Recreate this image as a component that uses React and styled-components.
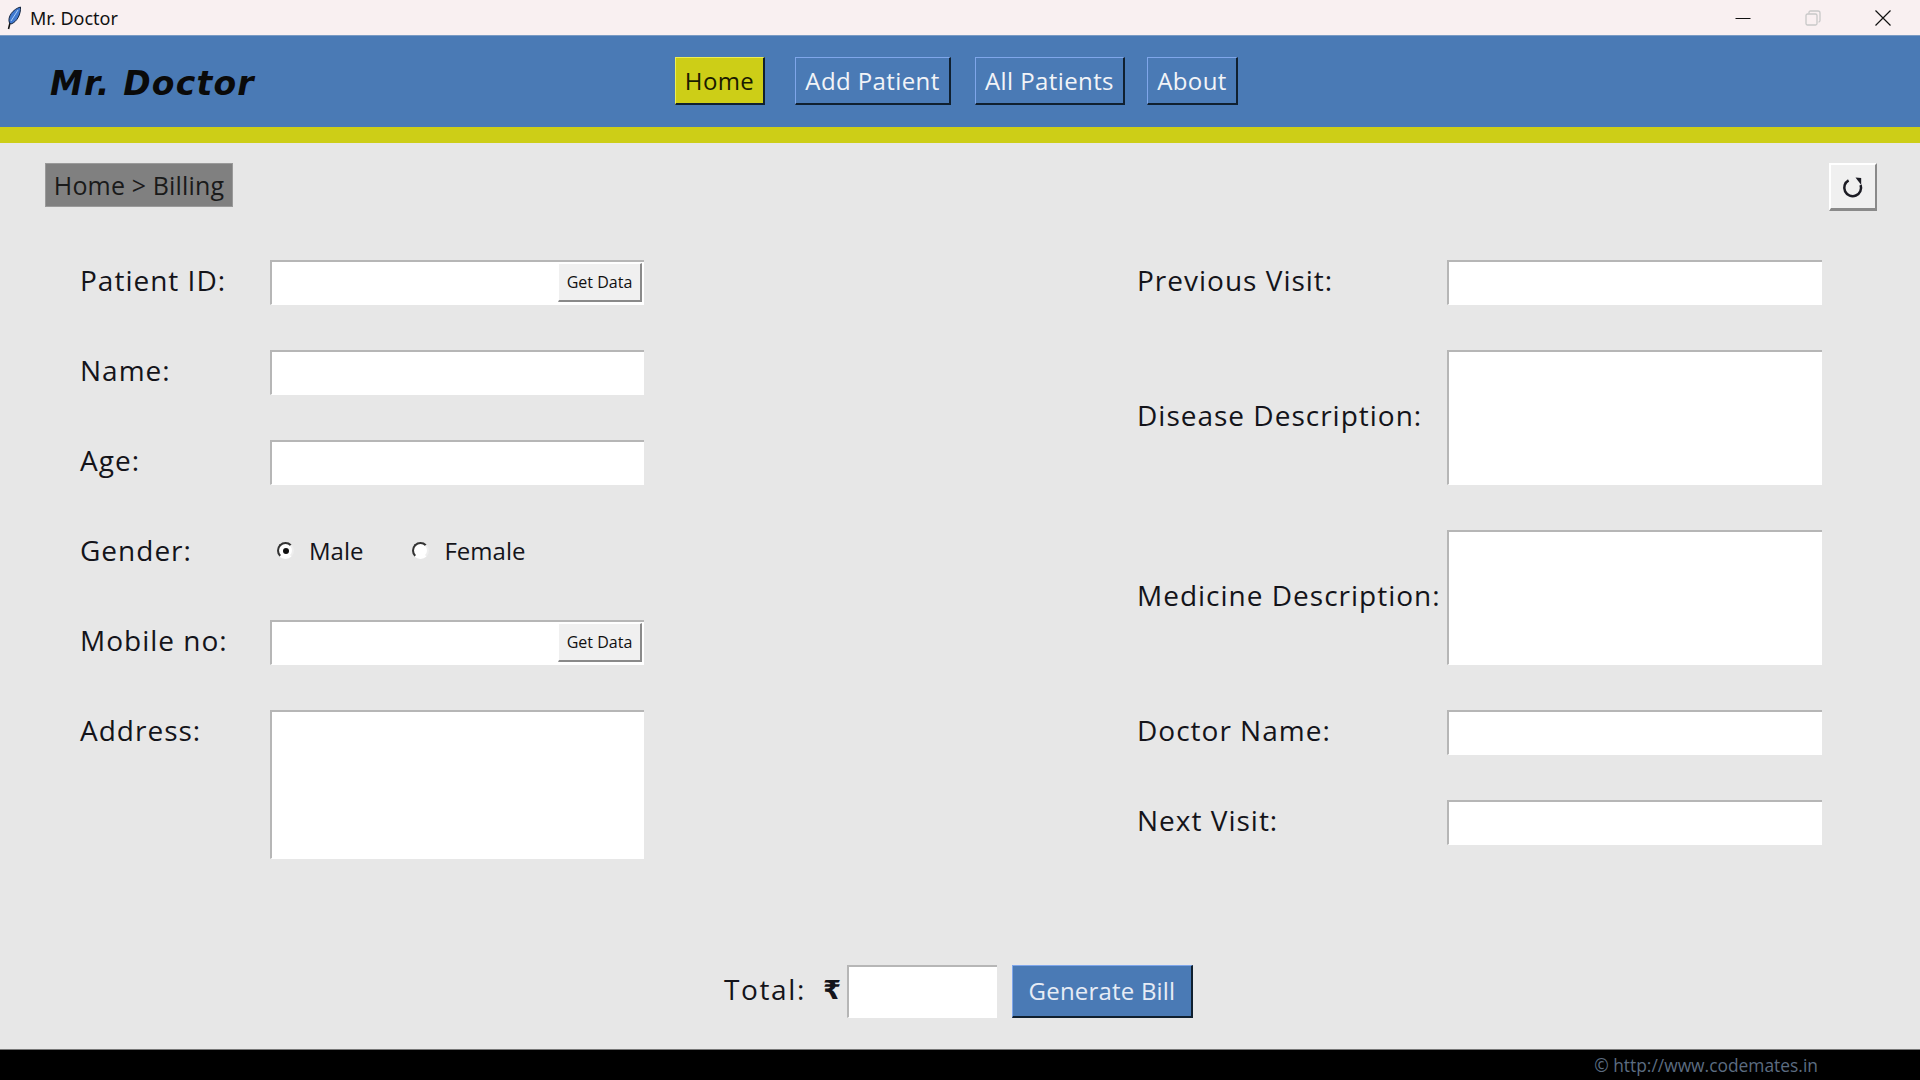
import React from 'react';
import styled, { createGlobalStyle } from 'styled-components';

const GlobalStyle = createGlobalStyle`
  html, body {
    margin: 0;
    padding: 0;
    height: 100%;
    overflow: hidden;
  }
  * {
    box-sizing: border-box;
  }
`;

const Page = styled.div`
  display: flex;
  flex-direction: column;
  width: 1920px;
  height: 1080px;
  background: #e7e7e7;
  font-family: "Open Sans", "DejaVu Sans", sans-serif;
  color: #14141a;
`;

const TitleBar = styled.div`
  display: flex;
  align-items: center;
  height: 35px;
  padding-left: 6px;
  background: #f9f0f1;
  font-family: "Noto Sans", sans-serif;
  font-size: 18px;
  color: #111;
`;

const TitleText = styled.span`
  margin-left: 8px;
`;

const WindowButtons = styled.div`
  display: flex;
  align-items: center;
  margin-left: auto;
  padding-right: 2px;
`;

const WindowButton = styled.div`
  display: flex;
  align-items: center;
  justify-content: center;
  width: 70px;
  height: 35px;
`;

const Header = styled.header`
  display: flex;
  align-items: flex-start;
  height: 92px;
  background: #4a7ab5;
  border-top: 1px solid #7a9bc4;
`;

const Logo = styled.div`
  width: 675px;
  padding: 28px 0 0 50px;
  font-family: "DejaVu Sans", sans-serif;
  font-style: italic;
  font-weight: 700;
  font-size: 33px;
  letter-spacing: 1.2px;
  line-height: 40px;
  color: #0a0a0a;
`;

const Nav = styled.nav`
  display: flex;
  padding-top: 21px;
`;

const NavButton = styled.div`
  display: flex;
  align-items: center;
  justify-content: center;
  width: ${(p) => p.$width}px;
  height: 48px;
  margin-right: ${(p) => p.$gap || 0}px;
  font-size: 24px;
  letter-spacing: 0.4px;
  background: ${(p) => (p.$active ? '#cdce17' : '#4a7ab5')};
  color: ${(p) => (p.$active ? '#1a1a00' : '#f2f4f8')};
  border-style: solid;
  border-width: 1px 2px 2px 1px;
  border-color: ${(p) => (p.$active ? '#eeee55' : '#7fa6ea')} #10202f #10202f ${(p) => (p.$active ? '#eeee55' : '#7fa6ea')};
`;

const Stripe = styled.div`
  height: 16px;
  background: #cdce17;
`;

const Main = styled.main`
  display: flex;
  flex-direction: column;
  flex: 1;
  min-height: 0;
  padding: 20px 43px 0 45px;
`;

const TopRow = styled.div`
  display: flex;
  justify-content: space-between;
  align-items: flex-start;
  height: 97px;
`;

const Breadcrumb = styled.div`
  display: flex;
  align-items: center;
  justify-content: center;
  width: 188px;
  height: 44px;
  background: #808080;
  border: 1px solid #9a9a9a;
  font-size: 25px;
  letter-spacing: 0.15px;
  color: #1a1a1a;
`;

const RefreshButton = styled.div`
  display: flex;
  align-items: center;
  justify-content: center;
  width: 48px;
  height: 48px;
  background: #f0f0f0;
  border-style: solid;
  border-width: 2px 2px 3px 2px;
  border-color: #fff #8a8a8a #8a8a8a #fff;
`;

const FormColumns = styled.div`
  display: flex;
  padding-left: 35px;
`;

const FormGrid = styled.div`
  display: grid;
  grid-template-columns: ${(p) => p.$labelWidth}px ${(p) => p.$fieldWidth}px;
  grid-auto-rows: 45px;
  row-gap: 45px;
  width: ${(p) => p.$width}px;
`;

const Label = styled.div`
  display: flex;
  align-items: ${(p) => (p.$top ? 'flex-start' : 'center')};
  height: 100%;
  padding-bottom: 4px;
  font-size: 28px;
  line-height: 41px;
  letter-spacing: 1px;
  white-space: nowrap;
  grid-row: ${(p) => (p.$span ? `span ${p.$span}` : 'auto')};
`;

const Input = styled.input`
  width: 100%;
  height: 100%;
  padding: 0 4px;
  background: #fff;
  border-style: solid;
  border-width: 2px 0 1px 2px;
  border-color: #b6b6b6 #fff #fff #b6b6b6;
  outline: none;
`;

const InputWithButton = styled.div`
  display: flex;
  justify-content: flex-end;
  align-items: center;
  height: 100%;
  padding: 0 2px 1px 0;
  background: #fff;
  border-style: solid;
  border-width: 2px 0 1px 2px;
  border-color: #b6b6b6 #fff #fff #b6b6b6;
`;

const SmallButton = styled.div`
  display: flex;
  align-items: center;
  justify-content: center;
  width: 84px;
  height: 39px;
  background: #f0f0f0;
  border-style: solid;
  border-width: 1px 2px 2px 1px;
  border-color: #fff #8a8a8a #8a8a8a #fff;
  font-size: 16px;
  color: #111;
`;

const TextArea = styled.textarea`
  display: block;
  width: 100%;
  height: ${(p) => p.$height}px;
  padding: 4px;
  resize: none;
  background: #fff;
  border-style: solid;
  border-width: 2px 0 1px 2px;
  border-color: #b6b6b6 #fff #fff #b6b6b6;
  outline: none;
  grid-row: ${(p) => (p.$span ? `span ${p.$span}` : 'auto')};
`;

const RadioRow = styled.div`
  display: flex;
  align-items: center;
  height: 100%;
  padding: 0 0 4px 7px;
`;

const RadioOption = styled.div`
  display: flex;
  align-items: center;
  margin-right: ${(p) => p.$gap || 0}px;
  font-size: 24px;
`;

const RadioDot = styled.span`
  display: flex;
  align-items: center;
  justify-content: center;
  width: 17px;
  height: 17px;
  margin-right: 15px;
  border-radius: 50%;
  background: #fff;
  border: 2px solid;
  border-color: #333 #eee #fff #333;

  &::after {
    content: '';
    display: ${(p) => (p.$checked ? 'block' : 'none')};
    width: 6px;
    height: 6px;
    border-radius: 50%;
    background: #111;
  }
`;

const TotalRow = styled.div`
  display: flex;
  justify-content: center;
  align-items: center;
  margin-top: 120px;
  height: 53px;
  padding-right: 5px;
`;

const TotalLabel = styled.div`
  font-size: 28px;
  letter-spacing: 1.6px;
  margin-right: 17px;
  padding-bottom: 6px;
`;

const Rupee = styled.div`
  font-family: "DejaVu Sans", sans-serif;
  font-size: 26px;
  font-weight: 700;
  margin-right: 6px;
  padding-bottom: 3px;
`;

const TotalInput = styled(Input)`
  width: 150px;
  height: 53px;
  margin-right: 15px;
`;

const GenerateButton = styled.div`
  display: flex;
  align-items: center;
  justify-content: center;
  width: 181px;
  height: 53px;
  padding-bottom: 2px;
  background: #4a7ab5;
  color: #e6ecf5;
  font-size: 24px;
  letter-spacing: 0.2px;
  border-style: solid;
  border-width: 1px 2px 2px 1px;
  border-color: #7fa6ea #10202f #10202f #7fa6ea;
`;

const Footer = styled.footer`
  display: flex;
  justify-content: flex-end;
  align-items: center;
  height: 31px;
  padding-right: 102px;
  background: #000;
  border-top: 1px solid #777;
  font-size: 17.4px;
  color: #5c6c80;
`;

const FeatherIcon = () => (
  <svg width="16" height="24" viewBox="0 0 16 24">
    <path d="M2.5 23 L4.5 15" stroke="#111" strokeWidth="1.5" fill="none" />
    <path d="M3.5 17 C1 11 7 3 14.5 1 C15 8 11 16 5 18 Z" fill="#3f78cf" stroke="#16263f" strokeWidth="1" />
    <path d="M5 15 L12 4" stroke="#a9cdf5" strokeWidth="1" fill="none" />
  </svg>
);

const RefreshIcon = () => (
  <svg width="24" height="24" viewBox="0 0 24 24">
    <path d="M7.6 5.4 A8.4 8.4 0 1 0 19.6 10" fill="none" stroke="#1c1c24" strokeWidth="2.5" />
    <path d="M14.5 2.5 L20.2 3 L20.2 10 Z" fill="#1c1c24" />
  </svg>
);

const App = () => (
  <Page>
    <GlobalStyle />
    <TitleBar>
      <FeatherIcon />
      <TitleText>Mr. Doctor</TitleText>
      <WindowButtons>
        <WindowButton>
          <svg width="16" height="16" viewBox="0 0 16 16">
            <path d="M0.5 8.5 H15.5" stroke="#111" strokeWidth="1" />
          </svg>
        </WindowButton>
        <WindowButton>
          <svg width="16" height="16" viewBox="0 0 16 16" fill="none" stroke="#c8c8c8" strokeWidth="1.3">
            <rect x="1" y="4" width="11" height="11" rx="1.5" />
            <path d="M4 3.5 V2.5 C4 1.5 4.5 1 5.5 1 H13 C14.2 1 15 1.8 15 3 V10.5 C15 11.5 14.5 12 13.5 12" />
          </svg>
        </WindowButton>
        <WindowButton>
          <svg width="16" height="16" viewBox="0 0 16 16">
            <path d="M0.5 0.5 L15.5 15.5 M15.5 0.5 L0.5 15.5" stroke="#111" strokeWidth="1.2" />
          </svg>
        </WindowButton>
      </WindowButtons>
    </TitleBar>

    <Header>
      <Logo>Mr. Doctor</Logo>
      <Nav>
        <NavButton $active $width={90} $gap={30}>Home</NavButton>
        <NavButton $width={156} $gap={24}>Add Patient</NavButton>
        <NavButton $width={150} $gap={22}>All Patients</NavButton>
        <NavButton $width={91}>About</NavButton>
      </Nav>
    </Header>
    <Stripe />

    <Main>
      <TopRow>
        <Breadcrumb>Home &gt; Billing</Breadcrumb>
        <RefreshButton><RefreshIcon /></RefreshButton>
      </TopRow>

      <FormColumns>
        <FormGrid $labelWidth={190} $fieldWidth={374} $width={1057}>
          <Label>Patient ID:</Label>
          <InputWithButton><SmallButton>Get Data</SmallButton></InputWithButton>
          <Label>Name:</Label>
          <Input />
          <Label>Age:</Label>
          <Input />
          <Label>Gender:</Label>
          <RadioRow>
            <RadioOption $gap={49}><RadioDot $checked />Male</RadioOption>
            <RadioOption><RadioDot />Female</RadioOption>
          </RadioRow>
          <Label>Mobile no:</Label>
          <InputWithButton><SmallButton>Get Data</SmallButton></InputWithButton>
          <Label $top $span={2}>Address:</Label>
          <TextArea $span={2} $height={149} />
        </FormGrid>

        <FormGrid $labelWidth={310} $fieldWidth={375} $width={685}>
          <Label>Previous Visit:</Label>
          <Input />
          <Label $span={2}>Disease Description:</Label>
          <TextArea $span={2} $height={135} />
          <Label $span={2}>Medicine Description:</Label>
          <TextArea $span={2} $height={135} />
          <Label>Doctor Name:</Label>
          <Input />
          <Label>Next Visit:</Label>
          <Input />
        </FormGrid>
      </FormColumns>

      <TotalRow>
        <TotalLabel>Total:</TotalLabel>
        <Rupee>₹</Rupee>
        <TotalInput />
        <GenerateButton>Generate Bill</GenerateButton>
      </TotalRow>
    </Main>

    <Footer>© http://www.codemates.in</Footer>
  </Page>
);

export default App;
